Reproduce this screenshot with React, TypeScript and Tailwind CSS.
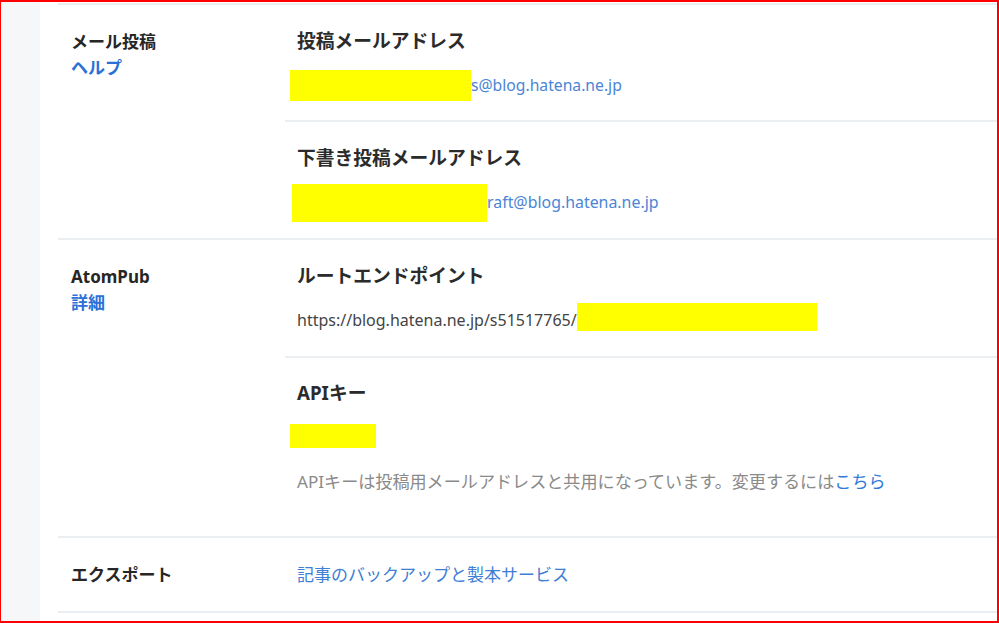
import React from "react";

const font = { fontFamily: '"Noto Sans", "Noto Sans CJK JP", sans-serif' };

function Redacted({ className }: { className: string }) {
  // yellow redaction block over private values
  return <span className={`inline-block shrink-0 bg-[#ffff00] ${className}`} />;
}

function Label({ title, link }: { title: string; link?: string }) {
  return (
    <div className="w-[227px] shrink-0 pl-[13px] pt-[24px]">
      <div className="text-[17px] leading-[26px] font-bold text-[#262626]">{title}</div>
      {link && (
        <a href="#" className="block text-[17px] leading-[26px] font-bold text-[#2a70d6]">
          {link}
        </a>
      )}
    </div>
  );
}

function Heading({ children }: { children: React.ReactNode }) {
  return <div className="text-[18.75px] leading-[24px] font-bold text-[#2b2b2b]">{children}</div>;
}

export default function App() {
  return (
    <div
      style={font}
      className="flex w-[999px] h-[623px] overflow-hidden border-t-2 border-r-2 border-b-2 border-l border-[#ff0000] bg-white"
    >
      <div className="w-[39px] shrink-0 bg-[#f6f7f9]" />

      <main className="flex-1 pl-[18px] pt-[1px]">
        {/* メール投稿 */}
        <section className="flex border-t-2 border-[#eceff1]">
          <Label title="メール投稿" link="ヘルプ" />
          <div className="flex-1">
            <div className="pl-[12px] pt-[24px] pb-[19px]">
              <Heading>投稿メールアドレス</Heading>
              <div className="mt-[17px] flex h-[31px] items-center">
                <Redacted className="ml-[-7px] w-[181px] h-[31px]" />
                <span className="text-[15.7px] text-[#4a85d6]">s@blog.hatena.ne.jp</span>
              </div>
            </div>
            <div className="border-t-2 border-[#eceff1] pl-[12px] pt-[24px] pb-[16px]">
              <Heading>下書き投稿メールアドレス</Heading>
              <div className="mt-[14px] flex h-[38px] items-center">
                <Redacted className="ml-[-5px] w-[195px] h-[38px]" />
                <span className="text-[15.9px] text-[#4a85d6]">raft@blog.hatena.ne.jp</span>
              </div>
            </div>
          </div>
        </section>

        {/* AtomPub */}
        <section className="flex border-t-2 border-[#eceff1]">
          <Label title="AtomPub" link="詳細" />
          <div className="flex-1">
            <div className="pl-[12px] pt-[24px] pb-[25px]">
              <Heading>ルートエンドポイント</Heading>
              <div className="mt-[15px] flex h-[28px] items-center">
                <span className="pt-[5px] text-[16px] text-[#444]">https://blog.hatena.ne.jp/s51517765/</span>
                <Redacted className="w-[240px] h-[28px]" />
              </div>
            </div>
            <div className="border-t-2 border-[#eceff1] pl-[12px] pt-[23px] pb-[42px]">
              <Heading>APIキー</Heading>
              <div className="mt-[19px] flex h-[24px]">
                <Redacted className="ml-[-7px] w-[86px] h-[24px]" />
              </div>
              <p className="mt-[22px] text-[17.1px] leading-[24px] text-[#8a8a8a]">
                APIキーは投稿用メールアドレスと共用になっています。変更するには
                <a href="#" className="text-[#2f7ad8]">こちら</a>
              </p>
            </div>
          </div>
        </section>

        {/* エクスポート */}
        <section className="flex border-t-2 border-b-2 border-[#eceff1]">
          <div className="w-[227px] shrink-0 pl-[13px] pt-[24px] pb-[23px]">
            <div className="text-[17px] leading-[26px] font-bold text-[#262626]">エクスポート</div>
          </div>
          <div className="flex-1 pl-[12px] pt-[24px]">
            <a href="#" className="text-[17px] leading-[26px] text-[#3f80d4]">
              記事のバックアップと製本サービス
            </a>
          </div>
        </section>
      </main>
    </div>
  );
}
